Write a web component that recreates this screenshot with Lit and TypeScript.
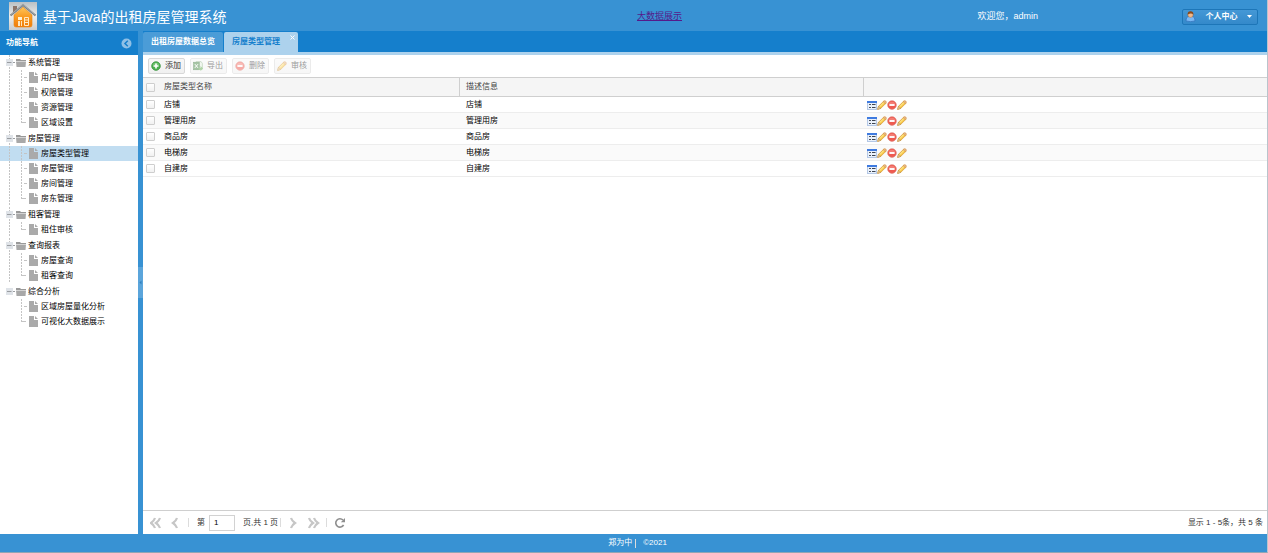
import { LitElement, html, css, svg, nothing } from "lit";
import { customElement, property, state } from "lit/decorators.js";
import { classMap } from "lit/directives/class-map.js";

interface TreeGroup {
  label: string;
  items: string[];
}

interface HouseType {
  name: string;
  description: string;
}

const GROUPS: TreeGroup[] = [
  { label: "系统管理", items: ["用户管理", "权限管理", "资源管理", "区域设置"] },
  { label: "房屋管理", items: ["房屋类型管理", "房屋管理", "房间管理", "房东管理"] },
  { label: "租客管理", items: ["租住审核"] },
  { label: "查询报表", items: ["房屋查询", "租客查询"] },
  { label: "综合分析", items: ["区域房屋量化分析", "可视化大数据展示"] },
];

const ROWS: HouseType[] = ["店铺", "管理用房", "商品房", "电梯房", "自建房"].map((n) => ({
  name: n,
  description: n,
}));

const glyph = (size: number, view: string, body: unknown) =>
  html`<svg width=${size} height=${size} viewBox=${view} aria-hidden="true">${body}</svg>`;

const iconAdd = () =>
  glyph(10, "0 0 16 16", svg`
    <circle cx="8" cy="8" r="7" fill="#4caf50" stroke="#2f8a35" />
    <path d="M2.5 6a6 5 0 0 1 11 0Q8 8 2.5 6Z" fill="#8fd48c" opacity=".6" />
    <path d="M8 4v8M4 8h8" stroke="#fff" stroke-width="2.6" />`);

const iconRemove = () =>
  glyph(10, "0 0 16 16", svg`
    <circle cx="8" cy="8" r="7" fill="#ee5a50" stroke="#dd8078" />
    <path d="M2.5 6a6 5 0 0 1 11 0Q8 8 2.5 6Z" fill="#f8958c" opacity=".6" />
    <path d="M3.8 8h8.4" stroke="#fff" stroke-width="3" />`);

const iconPencil = () =>
  glyph(10, "0 0 16 16", svg`
    <path d="M1 15l1.4-5L11 1.6l3.6 3.3L6 13.4z" fill="#f9c94a" stroke="#cf8f35" />
    <path d="M4 11l7.6-7.6" stroke="#fff0a0" stroke-width="1.6" />
    <path d="M11 1.6q1.4-1.4 3 0t.6 3.3l-1.2 1.2L9.9 2.7z" fill="#e8b58a" stroke="#cf8f35" stroke-width=".8" />
    <path d="M1 15l1.4-5L6 13.4z" fill="#efd3a4" stroke="#b08238" stroke-width=".8" />`);

const iconForm = () =>
  glyph(10, "0 0 10 10", svg`
    <rect y="1" width="10" height="9" fill="#b4c8e6" />
    <rect y="1" width="10" height="2" fill="#3f7be0" />
    <rect x="1" y="3" width="8" height="6" fill="#eaf1fb" />
    <path d="M2 4.5h2M2 7.5h2" stroke="#4a525f" />
    <path d="M5 4.5h4M5 7.5h4" stroke="#3d4450" />
    <path d="M8.500 4v1M8.500 7v1" stroke="#8a94a5" />`);

const iconExcel = () =>
  glyph(10, "0 0 16 16", svg`
    <path d="M5 1h8l2 3v9H5z" fill="#e4efe0" stroke="#6f9d68" />
    <rect x="1" y="2" width="9" height="12" fill="#4f8c4c" stroke="#2f6b30" />
    <path d="M3 5l5 6M8 5l-5 6" stroke="#fff" stroke-width="1.6" />
    <path d="M9 11h3V8l4 4-4 4v-2H9z" fill="#5fa84e" />`);

const iconUser = () =>
  glyph(11, "0 0 16 16", svg`
    <path d="M1.500 14.500q0-6.500 4.500-6.500h4q4.500 0 4.500 6.500-6.500 2-13 0z" fill="#79b8f5" stroke="#2f6db8" />
    <circle cx="8" cy="5.500" r="3.800" fill="#f1b98c" stroke="#9b6031" stroke-width=".6" />
    <path d="M3.800 5.500Q3.500 .5 8 .5t4.200 5Q11 3.400 8 3.500T3.800 5.500z" fill="#8a4a1c" />`);

const iconFolder = () =>
  glyph(12, "0 0 12 12", svg`
    <path d="M0 2h4l1 1h5v1H0z" fill="#999" />
    <path d="M0 4.600h10L9.500 10h-9z" fill="#a8a8a8" />`);

const iconFile = () =>
  glyph(13, "0 0 13 13", svg`
    <path d="M1 1h5v4h4v7H1z" fill="#aaa" />
    <path d="M7 1l3 3H7z" fill="#aaa" />`);

const chevrons = (paths: string) =>
  glyph(12, "0 0 12 12", svg`<path d=${paths} fill="none" stroke="#c6c6c6" stroke-width="2.2" />`);

const iconFirst = () => chevrons("M5 1Q4 4 1 6q3 2 4 5M10 1Q9 4 6 6q3 2 4 5");
const iconPrev = () => chevrons("M7 1Q6 4 3 6q3 2 4 5");
const iconNext = () => chevrons("M3 1q1 3 4 5-3 2-4 5");
const iconLast = () => chevrons("M1 1q1 3 4 5-3 2-4 5M6 1q1 3 4 5-3 2-4 5");

const iconRefresh = () =>
  glyph(12, "0 0 12 12", svg`
    <path d="M9 3A4.200 4.200 0 1 0 9.600 8" fill="none" stroke="#8e8e8e" stroke-width="1.6" />
    <path d="M11 1v4.200H6.800z" fill="#8e8e8e" />`);

const logo = () =>
  html`<svg class="logo" viewBox="0 0 28 28" role="img" aria-label="房屋管理">
    <defs>
      <linearGradient id="tile" x1="0" y1="0" x2="0" y2="1">
        <stop offset="0" stop-color="#b9c0c4" />
        <stop offset=".5" stop-color="#eeeeec" />
        <stop offset="1" stop-color="#c9cccd" />
      </linearGradient>
      <linearGradient id="wall" x1="0" y1="0" x2="0" y2="1">
        <stop offset="0" stop-color="#ffc65a" />
        <stop offset=".5" stop-color="#f99a20" />
        <stop offset="1" stop-color="#f07c08" />
      </linearGradient>
    </defs>
    <rect width="28" height="28" fill="url(#tile)" />
    <path d="M4 4h4v5l-4 3z" fill="#8b7468" />
    <path d="M5 13l9-8 9 8v10q0 2-2 2H7q-2 0-2-2z" fill="url(#wall)" stroke="#e98812" stroke-width=".6" />
    <path d="M1.500 13.500L14 3l12.500 10.500" fill="none" stroke="#7b8184" stroke-width="2" />
    <path d="M2 12.500L14 2.500l12 10" fill="none" stroke="#c5cacc" stroke-width=".6" />
    <rect x="9" y="15" width="4" height="3" fill="#fff0d4" />
    <rect x="9" y="19" width="2" height="5" fill="#ffe6bd" />
    <rect x="12" y="19" width="1" height="5" fill="#ffe6bd" />
    <path d="M15.500 15.500h4v8h-4zM15.500 18h4M15.500 20.500h4" fill="none" stroke="#ffe9c4" />
  </svg>`;

const base = css`
  * {
    box-sizing: border-box;
  }
  button,
  input {
    font: inherit;
    color: inherit;
    margin: 0;
    padding: 0;
  }
  button {
    border: 0;
    background: none;
    cursor: pointer;
  }
  svg {
    display: block;
    flex: none;
  }
`;

@customElement("nav-tree")
export class NavTree extends LitElement {
  @property() selected = "";

  static styles = [
    base,
    css`
      :host {
        display: block;
      }
      .groups,
      .items {
        list-style: none;
        margin: 0;
        padding: 0;
      }
      .groups {
        display: flex;
        flex-direction: column;
        gap: 1px;
      }
      .row {
        display: flex;
        align-items: center;
        height: 15px;
        width: 100%;
        padding-left: 4px;
        line-height: 15px;
        color: #000;
        text-decoration: none;
        white-space: nowrap;
      }
      .selected {
        background: #c1ddf1;
      }
      .trunk,
      .elbow,
      .toggle {
        flex: none;
        width: 12px;
        height: 15px;
        background: repeating-linear-gradient(#c4c4c4 0 2px, transparent 2px 3px) 5px 0 / 1px 100% no-repeat;
      }
      .elbow {
        background:
          repeating-linear-gradient(#c4c4c4 0 2px, transparent 2px 3px) 5px 0 / 1px 100% no-repeat,
          linear-gradient(#c4c4c4, #c4c4c4) 8px 7px / 3px 1px no-repeat;
      }
      .end {
        background-size: 1px 8px, 4px 1px;
        background-position: 5px 0, 6px 7px;
      }
      .toggle {
        display: flex;
        align-items: center;
        padding-left: 2px;
      }
      .none {
        background: none;
      }
    `,
  ];

  render() {
    const last = GROUPS.length - 1;
    return html`<ul class="groups">
      ${GROUPS.map(
        (g, i) => html`<li>
          <button class="row" aria-expanded="true">
            <span class=${classMap({ toggle: true, none: i === last })}>
              <svg width="9" height="7" viewBox="0 0 9 7" aria-hidden="true">
                <rect width="7" height="7" fill="#dfe3e8" />
                <path d="M1 3.5h4.5M7 3.5h2" stroke="#9a9da1" />
              </svg>
            </span>
            ${iconFolder()}<span>${g.label}</span>
          </button>
          <ul class="items">
            ${g.items.map(
              (item, j) => html`<li>
                <a
                  href="#"
                  class=${classMap({ row: true, selected: item === this.selected })}
                  aria-current=${item === this.selected ? "page" : nothing}
                >
                  <span class=${classMap({ trunk: true, none: i === last })}></span>
                  <span class=${classMap({ elbow: true, end: j === g.items.length - 1 })}></span>
                  ${iconFile()}<span>${item}</span>
                </a>
              </li>`,
            )}
          </ul>
        </li>`,
      )}
    </ul>`;
  }
}

@customElement("type-grid")
export class TypeGrid extends LitElement {
  static styles = [
    base,
    css`
      :host {
        display: block;
        overflow: auto;
      }
      .table {
        width: 100%;
        table-layout: fixed;
        border-collapse: separate;
        border-spacing: 0;
        line-height: 12px;
        color: #000;
      }
      .pick {
        width: 17px;
      }
      .name {
        width: 26.7%;
      }
      .about {
        width: 35.9%;
      }
      .head,
      .cell {
        padding: 0 4px;
        text-align: left;
        font-weight: 400;
        vertical-align: middle;
      }
      .head {
        height: 20px;
        background: #f5f5f5;
        border-top: 1px solid #cfcfcf;
        border-bottom: 1px solid #cfcfcf;
        color: #444;
      }
      .ruled {
        border-right: 1px solid #cfcfcf;
      }
      .cell {
        height: 16px;
        border-bottom: 1px solid #ededed;
      }
      .text {
        padding-left: 6px;
      }
      .label {
        padding-left: 4px;
      }
      .box {
        padding: 0 0 0 3px;
      }
      .ops {
        padding-left: 3px;
      }
      .alt {
        background: #fafafa;
      }
      .check {
        appearance: none;
        display: block;
        width: 9px;
        height: 9px;
        border: 1px solid #cecece;
        border-radius: 1px;
        background: linear-gradient(#fff, #f1f1f1);
      }
      .actions {
        display: flex;
      }
    `,
  ];

  render() {
    return html`<table class="table">
      <colgroup>
        <col class="pick" />
        <col class="name" />
        <col class="about" />
        <col />
      </colgroup>
      <thead>
        <tr>
          <th class="head box"><input class="check" type="checkbox" aria-label="全选" /></th>
          <th class="head label ruled">房屋类型名称</th>
          <th class="head text ruled">描述信息</th>
          <th class="head" aria-label="操作"></th>
        </tr>
      </thead>
      <tbody>
        ${ROWS.map(
          (r, i) => html`<tr class=${classMap({ alt: i % 2 === 1 })}>
            <td class="cell box"><input class="check" type="checkbox" aria-label=${r.name} /></td>
            <td class="cell label">${r.name}</td>
            <td class="cell text">${r.description}</td>
            <td class="cell ops">
              <div class="actions">
                <button aria-label="查看">${iconForm()}</button>
                <button aria-label="编辑">${iconPencil()}</button>
                <button aria-label="删除">${iconRemove()}</button>
                <button aria-label="审核">${iconPencil()}</button>
              </div>
            </td>
          </tr>`,
        )}
      </tbody>
    </table>`;
  }
}

@customElement("app-root")
export class AppRoot extends LitElement {
  @state() private page = "1";

  static styles = [
    base,
    css`
      :host {
        display: grid;
        grid-template-rows: auto 1fr auto;
        min-height: 100vh;
        box-sizing: border-box;
        border-right: 1px solid #b9c4cc;
        border-bottom: 1px solid #8fa5b5;
        background: #3892d3;
        font-family: "Liberation Sans", "Noto Sans CJK SC", sans-serif;
        font-size: 8px;
        line-height: 12px;
      }
      .header {
        display: grid;
        grid-template-columns: 1fr auto 1fr;
        align-items: center;
        height: 31px;
        padding: 0 9px;
        color: #fff;
      }
      .brand {
        display: flex;
        align-items: center;
        gap: 6px;
      }
      .logo {
        width: 28px;
        height: 28px;
      }
      .title {
        margin: 0;
        padding-top: 2px;
        font-size: 14px;
        line-height: 20px;
        font-weight: 400;
        white-space: nowrap;
      }
      .showcase {
        margin-left: 52px;
        font-size: 9px;
        color: #551a8b;
      }
      .account {
        display: flex;
        align-items: center;
        justify-content: flex-end;
        gap: 144px;
        font-size: 9px;
        white-space: nowrap;
      }
      .menu {
        display: flex;
        align-items: center;
        justify-content: space-between;
        width: 76px;
        height: 16px;
        margin-top: 2px;
        padding: 0 5px 0 2px;
        border: 1px solid #1d76b8;
        border-radius: 2px;
        background: linear-gradient(#4498d6, #3489ca);
        font-size: 8px;
        font-weight: 700;
      }
      .body {
        display: grid;
        grid-template-columns: 138px 5px minmax(0, 1fr);
      }
      .side {
        background: #fff;
      }
      .sidehead {
        display: flex;
        align-items: center;
        justify-content: space-between;
        height: 24px;
        padding: 0 6px;
        background: #157fcc;
        color: #fff;
      }
      .sidetitle {
        margin: 0;
        font-size: 8px;
        font-weight: 700;
      }
      .splitter {
        display: flex;
        align-items: center;
      }
      .handle {
        display: grid;
        place-items: center;
        width: 5px;
        height: 31px;
        background: #5ba5db;
      }
      .main {
        display: flex;
        flex-direction: column;
        background: #fff;
      }
      .tabs {
        display: flex;
        align-items: stretch;
        gap: 1px;
        height: 24px;
        padding-top: 1px;
        background: #157fcc;
        border-bottom: 3px solid #add2ed;
      }
      .tab {
        display: flex;
        align-items: center;
        padding: 0 8px;
        border-radius: 2px 2px 0 0;
        background: #4b9cd7;
        color: #fff;
        font-weight: 700;
      }
      .active {
        gap: 9px;
        padding-right: 2px;
        background: #add2ed;
        color: #157fcc;
      }
      .close {
        align-self: flex-start;
        padding: 3px 1px;
      }
      .toolbar {
        display: flex;
        align-items: center;
        gap: 5px;
        height: 22px;
        padding-left: 5px;
      }
      .tool {
        display: flex;
        align-items: center;
        gap: 4px;
        height: 16px;
        padding: 0 3px 0 2px;
        border: 1px solid #d8d8d8;
        border-radius: 2px;
        background: linear-gradient(#f7f7f7, #f0f0f0);
        color: #333;
      }
      .tool:disabled {
        opacity: 0.5;
        cursor: default;
      }
      .grid {
        flex: 1;
      }
      .pager {
        display: flex;
        align-items: center;
        height: 24px;
        padding: 0 4px 0 7px;
        border-top: 1px solid #cfcfcf;
        color: #333;
        white-space: nowrap;
      }
      .rule {
        width: 1px;
        height: 9px;
        background: #dcdcdc;
      }
      .steps {
        display: flex;
        gap: 8px;
        margin-right: 6px;
      }
      .forward {
        margin: 0 6px 0 7px;
      }
      .current {
        display: flex;
        align-items: center;
        gap: 4px;
        margin: 0 8px;
      }
      .number {
        width: 26px;
        height: 16px;
        padding: 0 4px;
        border: 1px solid #d2d2d2;
        background: #fff;
        color: #000;
      }
      .total {
        margin-right: 2px;
      }
      .reload {
        margin-left: 7px;
      }
      .summary {
        margin-left: auto;
      }
      .footer {
        display: flex;
        align-items: center;
        justify-content: center;
        gap: 3px;
        height: 18px;
        padding-left: 8px;
        color: #fff;
      }
      .year {
        margin-left: 4px;
      }
    `,
  ];

  render() {
    return html`
      <header class="header">
        <div class="brand">
          ${logo()}
          <h1 class="title">基于Java的出租房屋管理系统</h1>
        </div>
        <a class="showcase" href="#">大数据展示</a>
        <div class="account">
          <span>欢迎您，admin</span>
          <button class="menu">
            ${iconUser()}<span>个人中心</span>
            ${glyph(5, "0 0 5 5", svg`<path d="M0 1h5L2.500 4z" fill="#fff" />`)}
          </button>
        </div>
      </header>
      <div class="body">
        <nav class="side">
          <div class="sidehead">
            <h2 class="sidetitle">功能导航</h2>
            <button aria-label="收起">
              ${glyph(11, "0 0 11 11", svg`
                <circle cx="5.500" cy="5.500" r="5" fill="#8fc0e6" />
                <path d="M6.800 2.800L4 5.500l2.800 2.700" fill="none" stroke="#157fcc" stroke-width="1.500" />`)}
            </button>
          </div>
          <nav-tree selected="房屋类型管理"></nav-tree>
        </nav>
        <div class="splitter">
          <button class="handle" aria-label="折叠导航">
            ${glyph(5, "0 0 5 5", svg`<path d="M3.500 .5v4L1.500 2.500z" fill="#2f80bd" />`)}
          </button>
        </div>
        <main class="main">
          <div class="tabs" role="tablist">
            <button class="tab" role="tab" aria-selected="false">出租房屋数据总览</button>
            <button class="tab active" role="tab" aria-selected="true">
              <span>房屋类型管理</span>
              <span class="close">
                ${glyph(5, "0 0 5 5", svg`<path d="M.5 .5l4 4M4.500 .5l-4 4" stroke="#fff" />`)}
              </span>
            </button>
          </div>
          <div class="toolbar">
            <button class="tool">${iconAdd()}<span>添加</span></button>
            <button class="tool" disabled>${iconExcel()}<span>导出</span></button>
            <button class="tool" disabled>${iconRemove()}<span>删除</span></button>
            <button class="tool" disabled>${iconPencil()}<span>审核</span></button>
          </div>
          <type-grid class="grid"></type-grid>
          <div class="pager">
            <div class="steps">
              <button aria-label="第一页">${iconFirst()}</button>
              <button aria-label="上一页">${iconPrev()}</button>
            </div>
            <span class="rule"></span>
            <label class="current">第 <input class="number" type="text" .value=${this.page} /></label>
            <span class="total">页,共 1 页</span>
            <span class="rule"></span>
            <div class="steps forward">
              <button aria-label="下一页">${iconNext()}</button>
              <button aria-label="最后一页">${iconLast()}</button>
            </div>
            <span class="rule"></span>
            <button class="reload" aria-label="刷新">${iconRefresh()}</button>
            <span class="summary">显示 1 - 5条，共 5 条</span>
          </div>
        </main>
      </div>
      <footer class="footer">
        <span>郑为中</span><span class="rule"></span><span class="year">©2021</span>
      </footer>
    `;
  }
}
